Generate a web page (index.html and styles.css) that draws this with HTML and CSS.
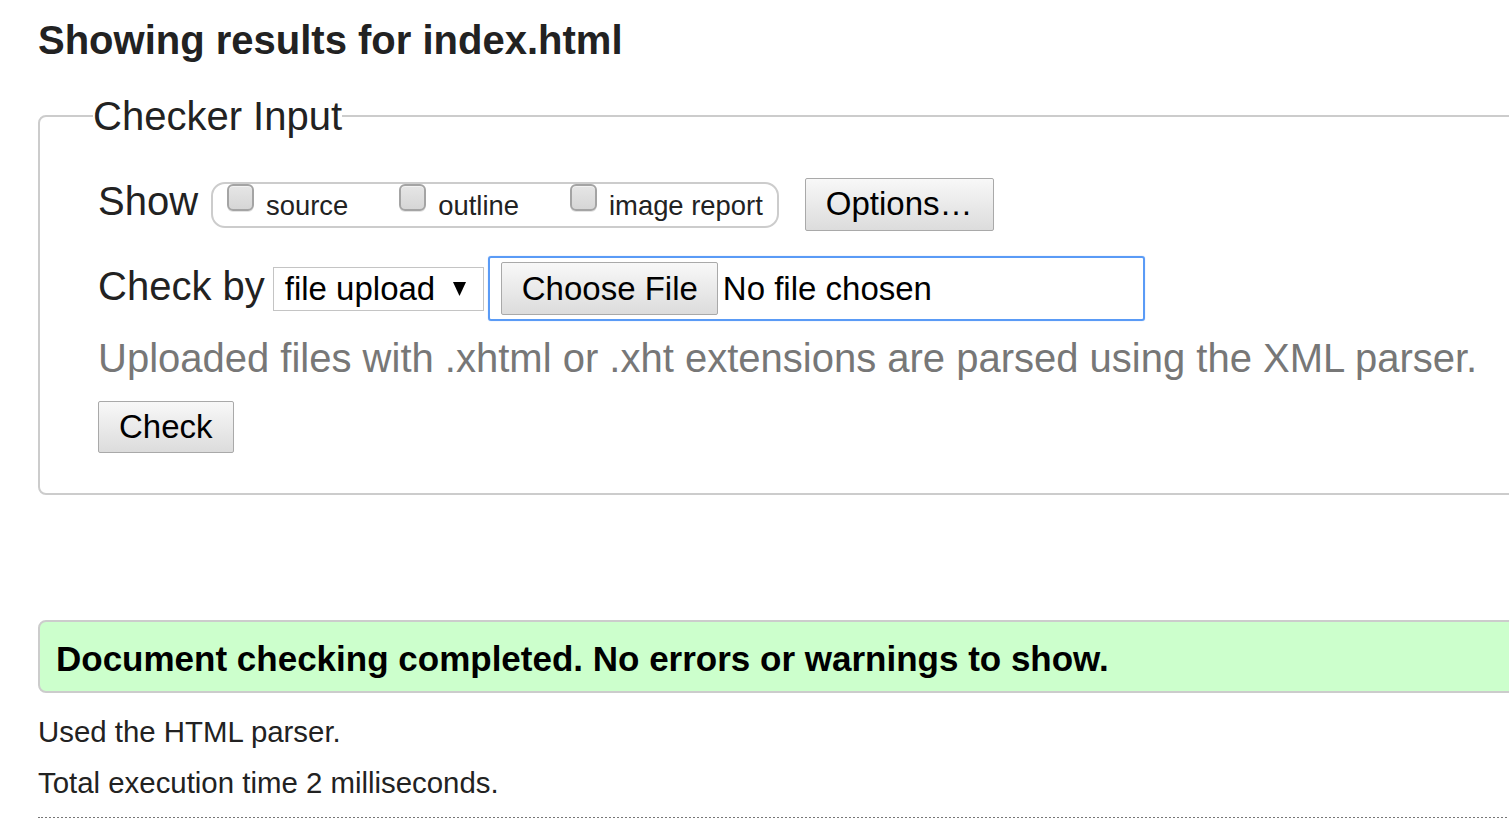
FILE: index.html
```html
<!DOCTYPE html>
<html lang="en">
<head>
<meta charset="utf-8">
<title>Showing results for index.html</title>
<link rel="stylesheet" href="styles.css">
</head>
<body>
<div class="page">
  <h2 class="title">Showing results for index.html</h2>
  <fieldset class="checker">
    <legend class="legend">Checker Input</legend>
    <div class="row row-show">
      <span class="row-label">Show</span>
      <div class="pill">
        <label class="opt"><input type="checkbox" class="cb"><span>source</span></label>
        <label class="opt"><input type="checkbox" class="cb"><span>outline</span></label>
        <label class="opt"><input type="checkbox" class="cb"><span>image report</span></label>
      </div>
      <button class="btn btn-options" type="button">Options…</button>
    </div>
    <div class="row row-check">
      <span class="row-label">Check by</span>
      <div class="select">
        <span>file upload</span>
        <svg class="arrow" width="13" height="14" viewBox="0 0 13 14"><polygon points="0,0 13,0 6.5,14" fill="#000"/></svg>
      </div>
      <div class="file">
        <span class="btn btn-file">Choose File</span>
        <span class="file-name">No file chosen</span>
      </div>
    </div>
    <p class="help">Uploaded files with .xhtml or .xht extensions are parsed using the XML parser.</p>
    <button class="btn btn-check" type="button">Check</button>
  </fieldset>
  <div class="success">Document checking completed. No errors or warnings to show.</div>
  <p class="note note-first">Used the HTML parser.</p>
  <p class="note">Total execution time 2 milliseconds.</p>
  <div class="footer-rule"></div>
</div>
</body>
</html>
```

FILE: styles.css
```css
html, body {
  margin: 0;
  padding: 0;
  overflow: hidden;
  background: #fff;
}

body {
  font-family: "Liberation Sans", Arial, sans-serif;
  color: #222;
  font-size: 29.4px;
}

.page {
  margin-left: 38px;
  width: 1600px;
}

.title {
  margin: 17px 0 0;
  font-size: 40px;
  font-weight: bold;
  line-height: 46px;
  color: #222;
}

.checker {
  margin: 30px 0 0;
  padding: 39px 0 40px 58px;
  border: 2px solid #cccccc;
  border-radius: 8px;
  min-inline-size: 0;
}

.legend {
  font-size: 40px;
  line-height: 46px;
  padding: 0;
  margin-left: -5px;
  color: #222;
}

.row {
  display: flex;
  align-items: baseline;
}

.row-label {
  font-size: 40px;
  line-height: 46px;
  color: #222;
}

.row-show .row-label {
  margin-right: 13px;
}

.pill {
  display: flex;
  gap: 51px;
  padding: 0 14px 4px 14px;
  border: 2px solid #cccccc;
  border-radius: 14px;
  font-size: 27.4px;
  line-height: normal;
  color: #222;
}

.opt {
  display: block;
  white-space: nowrap;
}

.cb {
  -webkit-appearance: none;
  appearance: none;
  display: inline-block;
  box-sizing: border-box;
  width: 27px;
  height: 27px;
  margin: 0 12px 4px 0;
  vertical-align: baseline;
  border: 2px solid #a4a4a4;
  border-radius: 6px;
  background: linear-gradient(#e6e6e6, #d6d6d6);
  box-shadow: inset 0 1px 0 #f2f2f2, 0 1px 0 #e4e4e4;
}

.btn {
  font-family: "Liberation Sans", Arial, sans-serif;
  font-size: 33px;
  line-height: 38px;
  color: #000;
  background: linear-gradient(#f8f8f8, #dcdcdc);
  border: 1px solid #a9a9a9;
  border-radius: 2px;
  box-sizing: border-box;
  margin: 0;
}

.btn-options {
  margin-left: 26px;
  padding: 6px 20px 7px;
}

.row-check {
  margin-top: 25px;
}

.row-check .row-label {
  margin-right: 8px;
}

.select {
  box-sizing: border-box;
  width: 211px;
  display: flex;
  align-items: baseline;
  justify-content: space-between;
  padding: 2px 17px 2px 11px;
  border: 1px solid #c4c4c4;
  font-size: 33px;
  line-height: 38px;
  color: #000;
  background: #fff;
}

.arrow {
  display: block;
  align-self: center;
}

.file {
  box-sizing: border-box;
  width: 657px;
  margin-left: 4px;
  display: flex;
  align-items: baseline;
  padding: 4px 11px;
  border: 2px solid #5a9bf6;
  border-radius: 3px;
  box-shadow: 0 0 1px #8fbaf8;
}

.btn-file {
  display: inline-block;
  padding: 7px 19px 6px 20px;
}

.file-name {
  margin-left: 5px;
  font-size: 33px;
  line-height: 38px;
  color: #000;
}

.help {
  margin: 14px 0 0;
  font-size: 40px;
  line-height: 46px;
  color: #777;
}

.btn-check {
  display: block;
  margin-top: 20px;
  padding: 6px 20px;
}

.success {
  margin-top: 125px;
  padding: 17px 17px 12px 16px;
  border: 2px solid #cccccc;
  border-radius: 8px;
  background: #ccffcc;
  font-size: 35px;
  line-height: 40px;
  font-weight: bold;
  color: #000;
}

.note {
  margin: 0 0 17px;
  font-size: 29.4px;
  line-height: normal;
  color: #222;
}

.note-first {
  margin-top: 22px;
}

.footer-rule {
  border-top: 2px dotted #777;
  margin-top: 0;
}
```
